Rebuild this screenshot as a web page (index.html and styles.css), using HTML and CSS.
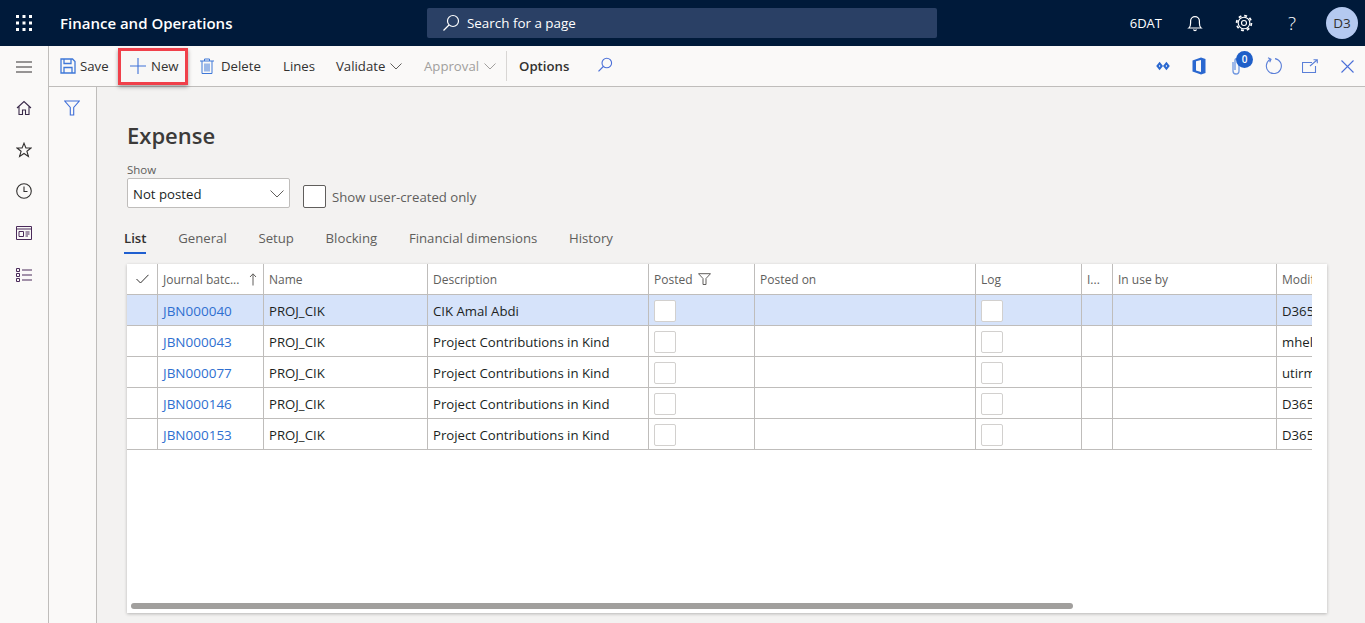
FILE: index.html
```html
<!DOCTYPE html>
<html lang="en">
<head>
  <meta charset="UTF-8" />
  <title>Expense - Finance and Operations</title>
  <link rel="stylesheet" href="styles.css">
</head>
<body>

<header class="topbar">
  <button class="waffle" aria-label="Apps">
    <svg viewBox="0 0 16 16" width="16" height="16"><g fill="#fff"><rect x="0" y="0" width="3" height="3"/><rect x="6.5" y="0" width="3" height="3"/><rect x="13" y="0" width="3" height="3"/><rect x="0" y="6.5" width="3" height="3"/><rect x="6.5" y="6.5" width="3" height="3"/><rect x="13" y="6.5" width="3" height="3"/><rect x="0" y="13" width="3" height="3"/><rect x="6.5" y="13" width="3" height="3"/><rect x="13" y="13" width="3" height="3"/></g></svg>
  </button>
  <h1 class="app-title">Finance and Operations</h1>
  <div class="search-box">
    <svg class="search-icon" viewBox="0 0 18 18" width="18" height="18"><circle cx="11" cy="7" r="5.5" fill="none" stroke="#fff" stroke-width="1.2"/><path d="M7 11 1.5 16.5" stroke="#fff" stroke-width="1.3"/></svg>
    <span>Search for a page</span>
  </div>
  <div class="top-right">
    <span class="company">6DAT</span>
    <svg class="bell" viewBox="0 0 16 18" width="16" height="18"><path d="M2 14c1.300-1 1.600-2.500 1.600-5V7a4.400 4.400 0 0 1 8.800 0v2c0 2.500.3 4 1.600 5z" fill="none" stroke="#fff" stroke-width="1.200"/><path d="M6.500 15.500a1.600 1.600 0 0 0 3 0" fill="none" stroke="#fff" stroke-width="1.200"/></svg>
    <svg class="gear" viewBox="0 0 18 18" width="18" height="18"><circle cx="9" cy="9" r="2.500" fill="none" stroke="#fff" stroke-width="1.100"/><circle cx="9" cy="9" r="5.800" fill="none" stroke="#fff" stroke-width="1.100"/><circle cx="9" cy="9" r="7.400" fill="none" stroke="#fff" stroke-width="1.800" stroke-dasharray="2.900 2.910"/></svg>
    <span class="help">?</span>
    <span class="avatar">D3</span>
  </div>
</header>

<div class="shell">
  <nav class="sidenav">
    <svg viewBox="0 0 16 12" width="16" height="12"><path d="M0 1h16M0 6h16M0 11h16" stroke="#323130" stroke-width="1.100"/></svg>
    <svg class="nav-home" viewBox="0 0 16 16" width="16" height="16"><path d="M1 8 8 1.500 15 8M3 6.500V14.500h3.500V10h3v4.500H13V6.500" fill="none" stroke="#3a2a4a" stroke-width="1.100"/></svg>
    <svg class="nav-star" viewBox="0 0 16 16" width="16" height="16"><path d="M8 1.200 9.900 6h5.100l-4.100 3.200 1.500 5.300L8 11.500l-4.400 3 1.500-5.300L1 6h5.100z" fill="none" stroke="#323130" stroke-width="1.100"/></svg>
    <svg class="nav-clock" viewBox="0 0 16 16" width="16" height="16"><circle cx="8" cy="8" r="7.300" fill="none" stroke="#323130" stroke-width="1.100"/><path d="M8 3.500V8.500H11.500" fill="none" stroke="#323130" stroke-width="1.100"/></svg>
    <svg class="nav-work" viewBox="0 0 16 14" width="16" height="14"><path d="M.5.500h15v13H.5zM.5 3h15M3 5.500h4.500v5H3zM9.500 6h4M9.500 8h4M9.500 10h2.500" fill="none" stroke="#4a2a5a" stroke-width="1"/></svg>
    <svg class="nav-list" viewBox="0 0 16 14" width="16" height="14"><path d="M.5.500h3v3h-3zM.5 5.500h3v3h-3zM.5 10.500h3v3h-3zM6 2h10M6 7h10M6 12h10" fill="none" stroke="#4a2a5a" stroke-width="1"/></svg>
  </nav>

  <div class="workspace">
    <div class="toolbar">
      <button class="tool tool-save">
        <svg viewBox="0 0 16 16" width="16" height="16"><path d="M1 1h11.500L15 3.500V15H1z M4 1v4.500h7V1 M4 15V9.500h8V15" fill="none" stroke="#3f78d8" stroke-width="1.300"/></svg>
        Save
      </button>
      <button class="tool tool-new">
        <svg viewBox="0 0 16 16" width="16" height="16"><path d="M8 0v16M0 8h16" stroke="#3f72d8" stroke-width="1.100"/></svg>
        New
      </button>
      <button class="tool tool-delete">
        <svg viewBox="0 0 14 16" width="14" height="16"><path d="M0 3h14M4.500 3V1h5v2M2 3v12.500h10V3M5 5.500v8M7 5.500v8M9 5.500v8" fill="none" stroke="#3f78d8" stroke-width="1"/></svg>
        Delete
      </button>
      <button class="tool tool-lines">Lines</button>
      <button class="tool tool-validate">Validate
        <svg viewBox="0 0 12 7" width="12" height="7"><path d="M.5.500 6 6l5.500-5.500" fill="none" stroke="#605e5c" stroke-width="1"/></svg>
      </button>
      <button class="tool tool-off">Approval
        <svg viewBox="0 0 12 7" width="12" height="7"><path d="M.5.500 6 6l5.500-5.500" fill="none" stroke="#a19f9d" stroke-width="1"/></svg>
      </button>
      <span class="tool-sep"></span>
      <button class="tool tool-options">Options</button>
      <svg class="tool-find" viewBox="0 0 16 16" width="16" height="16"><circle cx="9.800" cy="6" r="4.800" fill="none" stroke="#4a6fd8" stroke-width="1.100"/><path d="M6.300 9.500 1.500 14.300" stroke="#4a6fd8" stroke-width="1.200"/></svg>

      <div class="tool-right">
        <svg class="tr-diamond" viewBox="0 0 14 10" width="14" height="10"><path d="M3.600.8 7 5 3.600 9.200.2 5zM3.600 4 2.800 5l.8 1L4.400 5zM10.400.8 13.800 5l-3.400 4.200L7 5zM10.400 4 9.600 5l.8 1 .8-1z" fill="#2a68d0" fill-rule="evenodd"/></svg>
        <svg class="tr-office" viewBox="0 0 14 18" width="14" height="18"><path d="M.5 3.500 9 .5l4.500 1.500v14L9 17.500.5 14.500zM9 3 4 4.300v9.200l5 1.500z" fill="#2a68d0" fill-rule="evenodd"/></svg>
        <span class="tr-clip">
          <svg viewBox="0 0 10 18" width="10" height="18"><path d="M2 5v9a3 3 0 0 0 6 0V3.500a2 2 0 0 0-4 0V13" fill="none" stroke="#6f97e0" stroke-width="1.300"/></svg>
          <b class="badge">0</b>
        </span>
        <svg class="tr-refresh" viewBox="0 0 18 18" width="18" height="18"><path d="M5.500 2.300A7.500 7.500 0 1 0 10 1.600" fill="none" stroke="#5a7fd8" stroke-width="1.100"/><path d="M3 .8 6 2.300 4.700 5.300" fill="none" stroke="#5a7fd8" stroke-width="1.100"/></svg>
        <svg class="tr-popout" viewBox="0 0 16 14" width="16" height="14"><path d="M10 3.500H.5v10h13V7" fill="none" stroke="#5a7fd8" stroke-width="1.100"/><path d="M8 7 15 1M11.500 .8H15.300V4.300" fill="none" stroke="#5a7fd8" stroke-width="1.100"/></svg>
        <svg class="tr-close" viewBox="0 0 13 13" width="13" height="13"><path d="M.5.500l12 12M12.500.500l-12 12" stroke="#4a6fd8" stroke-width="1.100"/></svg>
      </div>
    </div>

    <div class="body-row">
      <aside class="filter-pane">
        <svg viewBox="0 0 16 16" width="16" height="16"><path d="M.7 1h14.600L9.700 7.500V15H6.300V7.500z" fill="none" stroke="#3f6fd8" stroke-width="1.100"/></svg>
      </aside>

      <main class="content">
        <h2 class="page-title">Expense</h2>
        <div class="filters">
          <div class="field">
            <label class="field-label">Show</label>
            <div class="select">
              <span>Not posted</span>
              <svg viewBox="0 0 14 8" width="14" height="8"><path d="M.5.500 7 7 13.500.500" fill="none" stroke="#605e5c" stroke-width="1"/></svg>
            </div>
          </div>
          <label class="check-field"><span class="checkbox-lg"></span>Show user-created only</label>
        </div>

        <div class="tabs">
          <a class="tab active">List</a>
          <a class="tab">General</a>
          <a class="tab">Setup</a>
          <a class="tab">Blocking</a>
          <a class="tab">Financial dimensions</a>
          <a class="tab">History</a>
        </div>

        <section class="grid-card">
          <div class="grid-clip">
            <div class="row head">
              <div class="cell cell-center"><svg viewBox="0 0 13 10" width="13" height="10"><path d="M.5 5 4.500 9 12.500.800" fill="none" stroke="#323130" stroke-width="1"/></svg></div>
              <div class="cell sort-cell">Journal batc...<svg viewBox="0 0 8 13" width="8" height="13"><path d="M4 12.500V1M1 4l3-3.200L7 4" fill="none" stroke="#605e5c" stroke-width="1"/></svg></div>
              <div class="cell">Name</div>
              <div class="cell">Description</div>
              <div class="cell">Posted<svg class="col-filter" viewBox="0 0 13 12" width="13" height="12"><path d="M.5.700h12L8 5.500v6H5v-6z" fill="none" stroke="#605e5c" stroke-width="1"/></svg></div>
              <div class="cell">Posted on</div>
              <div class="cell">Log</div>
              <div class="cell">I...</div>
              <div class="cell">In use by</div>
              <div class="cell cell-last">Modified by</div>
            </div>

            <div class="row selected">
              <div class="cell"></div>
              <div class="cell"><a class="link">JBN000040</a></div>
              <div class="cell">PROJ_CIK</div>
              <div class="cell">CIK Amal Abdi</div>
              <div class="cell"><span class="cb"></span></div>
              <div class="cell"></div>
              <div class="cell"><span class="cb"></span></div>
              <div class="cell"></div>
              <div class="cell"></div>
              <div class="cell cell-last">D365</div>
            </div>
            <div class="row">
              <div class="cell"></div>
              <div class="cell"><a class="link">JBN000043</a></div>
              <div class="cell">PROJ_CIK</div>
              <div class="cell">Project Contributions in Kind</div>
              <div class="cell"><span class="cb"></span></div>
              <div class="cell"></div>
              <div class="cell"><span class="cb"></span></div>
              <div class="cell"></div>
              <div class="cell"></div>
              <div class="cell cell-last">mhelmy</div>
            </div>
            <div class="row">
              <div class="cell"></div>
              <div class="cell"><a class="link">JBN000077</a></div>
              <div class="cell">PROJ_CIK</div>
              <div class="cell">Project Contributions in Kind</div>
              <div class="cell"><span class="cb"></span></div>
              <div class="cell"></div>
              <div class="cell"><span class="cb"></span></div>
              <div class="cell"></div>
              <div class="cell"></div>
              <div class="cell cell-last">utirmizi</div>
            </div>
            <div class="row">
              <div class="cell"></div>
              <div class="cell"><a class="link">JBN000146</a></div>
              <div class="cell">PROJ_CIK</div>
              <div class="cell">Project Contributions in Kind</div>
              <div class="cell"><span class="cb"></span></div>
              <div class="cell"></div>
              <div class="cell"><span class="cb"></span></div>
              <div class="cell"></div>
              <div class="cell"></div>
              <div class="cell cell-last">D365</div>
            </div>
            <div class="row">
              <div class="cell"></div>
              <div class="cell"><a class="link">JBN000153</a></div>
              <div class="cell">PROJ_CIK</div>
              <div class="cell">Project Contributions in Kind</div>
              <div class="cell"><span class="cb"></span></div>
              <div class="cell"></div>
              <div class="cell"><span class="cb"></span></div>
              <div class="cell"></div>
              <div class="cell"></div>
              <div class="cell cell-last">D365</div>
            </div>
          </div>
          <div class="scroll-thumb"></div>
        </section>
      </main>
    </div>
  </div>
</div>

</body>
</html>
```

FILE: styles.css
```css
:root {
  --navy: #001a3a;
  --line: #bfbdbb;
  --text: #323130;
  --dark: #201f1e;
  --muted: #605e5c;
  --blue: #2f6fd0;
  --font: "Open Sans", "Noto Sans", Arial, sans-serif;
}

*, *::before, *::after { box-sizing: border-box; }

html, body { height: 100%; }

body {
  margin: 0;
  height: 623px;
  overflow: hidden;
  font-family: var(--font);
  font-size: 13.2px;
  color: var(--text);
  background: #f3f2f1;
  display: flex;
  flex-direction: column;
}

button {
  font: inherit;
  color: inherit;
  background: none;
  border: none;
  padding: 0;
}

svg { display: block; flex-shrink: 0; }

/* top bar */
.topbar {
  height: 46px;
  flex-shrink: 0;
  background: var(--navy);
  color: #fff;
  display: flex;
  align-items: center;
}

.waffle { margin-left: 16px; }

.app-title {
  margin: 0 0 0 28px;
  width: 367px;
  font-size: 15px;
  font-weight: 600;
  white-space: nowrap;
}

.search-box {
  width: 510px;
  height: 30px;
  background: #2a4065;
  border-radius: 2px;
  display: flex;
  align-items: center;
  gap: 7px;
  padding-left: 15px;
  font-size: 13.4px;
}

.top-right {
  margin-left: auto;
  display: flex;
  align-items: center;
}

.company { font-size: 13px; margin-right: 25px; }
.bell { margin-right: 32px; }
.gear { margin-right: 34px; }
.help { font-size: 19px; font-weight: 300; width: 10px; margin-right: 29px; text-align: center; }

.avatar {
  width: 32px;
  height: 32px;
  margin-right: 7px;
  border-radius: 50%;
  background: #b4c9f0;
  color: #323130;
  font-size: 13.5px;
  display: flex;
  align-items: center;
  justify-content: center;
}

/* shell */
.shell { flex: 1; min-height: 0; display: flex; }

.sidenav {
  width: 49px;
  flex-shrink: 0;
  background: #faf9f8;
  border-right: 1px solid var(--line);
  display: flex;
  flex-direction: column;
  align-items: center;
  padding: 15px 1px 0 0;
  gap: 28px;
}

.nav-home { margin-top: -1px; }
.nav-star { margin-top: -2px; }
.nav-clock { margin-top: -3px; }
.nav-work { margin-top: -1px; }

.workspace { flex: 1; min-width: 0; display: flex; flex-direction: column; }

/* toolbar */
.toolbar {
  height: 41px;
  flex-shrink: 0;
  background: #faf9f8;
  border-bottom: 1px solid var(--line);
  display: flex;
  align-items: center;
  padding-left: 11px;
}

.tool {
  display: flex;
  align-items: center;
  gap: 5px;
  height: 37px;
  white-space: nowrap;
}

.tool-save { width: 58px; flex-shrink: 0; gap: 4px; }

.tool-new {
  width: 70px;
  justify-content: flex-start;
  gap: 5px;
  padding-left: 9px;
  border: 3px solid #f0404a;
  box-shadow: 0 2px 4px rgba(0, 0, 0, 0.35);
  background: #f8f7f6;
  margin-right: 12px;
}

.tool-delete { gap: 7px; width: 83px; }
.tool-lines { width: 53px; }
.tool-validate { width: 88px; }
.tool-off { color: #a19f9d; width: 82px; }

.tool-sep {
  width: 1px;
  height: 30px;
  background: #d8d6d4;
  margin-right: 12px;
}

.tool-options { font-weight: 600; width: 78px; }
.tool-find { margin-top: -2px; }

.tool-right {
  margin-left: auto;
  display: flex;
  align-items: center;
  padding-right: 11px;
}

.tr-diamond { margin-right: 22px; }
.tr-office { margin-right: 25px; }
.tr-clip { position: relative; margin-right: 24px; }
.tr-refresh { margin-right: 19px; }
.tr-popout { margin-right: 23px; }

.badge {
  position: absolute;
  top: -6px;
  left: 5px;
  width: 17px;
  height: 17px;
  border-radius: 50%;
  background: #1f5fc8;
  color: #fff;
  font-size: 10px;
  font-weight: 600;
  line-height: 17px;
  text-align: center;
}

/* body */
.body-row { flex: 1; min-height: 0; display: flex; }

.filter-pane {
  width: 48px;
  flex-shrink: 0;
  background: #faf9f8;
  border-right: 1px solid var(--line);
  padding: 13px 0 0 15px;
}

.content { flex: 1; min-width: 0; padding: 0 38px 0 30px; }

.page-title {
  margin: 32px 0 0;
  font-size: 22px;
  font-weight: 600;
  line-height: 32px;
  color: #3b3a39;
}

.filters { display: flex; align-items: flex-end; margin-top: 12px; }

.field-label {
  display: block;
  font-size: 11.5px;
  line-height: 14px;
  color: var(--muted);
  margin-bottom: 1px;
}

.select {
  width: 163px;
  height: 30px;
  background: #fff;
  border: 1px solid var(--line);
  border-radius: 2px;
  display: flex;
  align-items: center;
  justify-content: space-between;
  padding: 1px 5px 0;
  color: var(--dark);
}

.check-field {
  display: flex;
  align-items: center;
  gap: 6px;
  margin-left: 13px;
  color: var(--muted);
}

.checkbox-lg {
  width: 23px;
  height: 23px;
  background: #fff;
  border: 1px solid #605e5c;
  border-radius: 2px;
}

.tabs { display: flex; gap: 31.7px; margin: 20px 0 0 -3px; }

.tab {
  line-height: 20px;
  color: var(--muted);
  padding-bottom: 4px;
  border-bottom: 2px solid transparent;
}

.tab.active {
  font-weight: 600;
  color: var(--text);
  border-bottom-color: #1f5fd0;
}

/* grid */
.grid-card {
  position: relative;
  height: 349px;
  margin-top: 10px;
  background: #fff;
  box-shadow: 0 1px 3px rgba(0, 0, 0, 0.25);
}

.grid-clip { width: 1185px; overflow: hidden; }

.row {
  display: grid;
  grid-template-columns: 31px 106px 164px 221px 106px 221px 106px 31px 164px 60px;
  width: 1210px;
  height: 31px;
  border-bottom: 1px solid var(--line);
  color: var(--dark);
}

.row.selected { background: #d6e3fa; }

.row.head { font-size: 12px; font-weight: 500; color: var(--muted); }

.cell {
  display: flex;
  align-items: center;
  padding: 2px 0 0 5px;
  border-right: 1px solid var(--line);
  white-space: nowrap;
  overflow: hidden;
}

.head .cell { padding-top: 0; }

.cell-last { border-right: none; }
.head .cell-center { justify-content: center; padding-left: 0; }
.head .sort-cell { justify-content: space-between; padding-right: 6px; }
.col-filter { margin-left: 5px; }

.link { color: var(--blue); font-size: 13.5px; }

.cb {
  width: 22px;
  height: 22px;
  background: #fff;
  border: 1px solid #d2d0ce;
  border-radius: 2px;
}

.scroll-thumb {
  position: absolute;
  left: 4px;
  bottom: 4px;
  width: 942px;
  height: 6px;
  border-radius: 3px;
  background: #a19f9d;
}
```
